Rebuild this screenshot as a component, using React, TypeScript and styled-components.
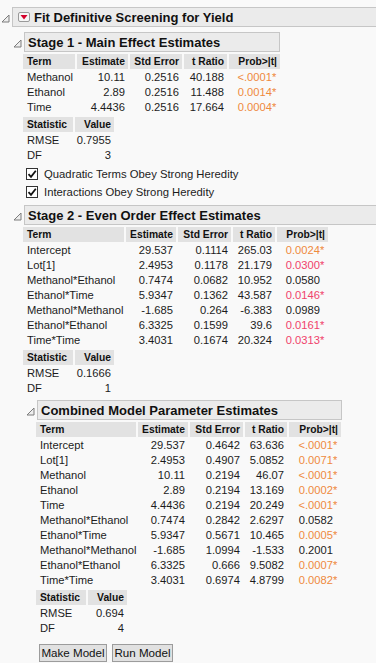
import React from "react";
import styled, { createGlobalStyle } from "styled-components";

const GlobalStyle = createGlobalStyle`
  html, body {
    margin: 0;
    padding: 0;
    background: #f9f9f9;
  }
  body {
    font-family: "Liberation Sans", Arial, sans-serif;
    font-size: 11.2px;
    color: #1c1c1c;
  }
`;

const Page = styled.div`
  width: 376px;
  height: 663px;
  overflow: hidden;
  padding-top: 7px;
  box-sizing: border-box;
`;

const Outline = styled.section<{ $x: number; $top?: number }>`
  margin-left: ${(p) => p.$x}px;
  margin-top: ${(p) => p.$top ?? 0}px;
`;

const OutlineHead = styled.div`
  display: flex;
  align-items: center;
`;

const Twisty = styled.span`
  width: 11px;
  height: 20px;
  display: flex;
  align-items: center;
  padding-top: 3px;
  box-sizing: border-box;
  flex: none;
`;

const TitleBar = styled.div<{ $width?: number }>`
  height: 20px;
  box-sizing: border-box;
  border: 1px solid #c6c6c6;
  background: #ebebeb;
  display: flex;
  align-items: center;
  gap: 4px;
  padding-left: 3px;
  font-weight: bold;
  font-size: 13px;
  white-space: nowrap;
  color: #111;
  ${(p) => (p.$width ? `width: ${p.$width}px;` : `flex: 1; margin-right: -6px;`)}
`;

const RedMenu = styled.span`
  display: flex;
  margin-left: 2px;
`;

const OutlineBody = styled.div<{ $indent: number }>`
  padding-left: ${(p) => p.$indent}px;
`;

const Grid = styled.div<{ $cols: string; $top: number }>`
  display: grid;
  grid-template-columns: ${(p) => p.$cols};
  column-gap: 2px;
  margin-top: ${(p) => p.$top}px;
  width: max-content;
`;

const HeadCell = styled.div<{ $right?: boolean }>`
  height: 15px;
  line-height: 15px;
  margin-bottom: 1px;
  background: #e2e2e2;
  font-weight: bold;
  font-size: 10.3px;
  text-align: ${(p) => (p.$right ? "right" : "left")};
  padding: ${(p) => (p.$right ? "0 3px 0 0" : "0 0 0 4px")};
  white-space: nowrap;
  color: #111;
`;

const Cell = styled.div<{ $right?: boolean; $tone?: string }>`
  height: 15px;
  line-height: 15px;
  text-align: ${(p) => (p.$right ? "right" : "left")};
  padding: ${(p) => (p.$right ? "0 3px 0 0" : "0 0 0 4px")};
  white-space: nowrap;
  color: ${(p) => p.$tone ?? "#1c1c1c"};
`;

const Star = styled.span`
  display: inline-block;
  width: 5px;
  text-align: left;
`;

const CheckList = styled.div`
  margin-top: 2px;
`;

const CheckRow = styled.label`
  display: flex;
  align-items: center;
  gap: 6px;
  height: 18px;
  padding-left: 3px;
  font-size: 11.3px;
`;

const Box = styled.span`
  width: 12px;
  height: 12px;
  box-sizing: border-box;
  border: 1px solid #333;
  background: #fff;
  display: grid;
  place-items: center;
`;

const ButtonRow = styled.div`
  display: flex;
  gap: 5px;
  margin: 8px 0 0 3px;
`;

const Button = styled.button<{ $w: number }>`
  width: ${(p) => p.$w}px;
  height: 18px;
  padding: 0;
  border: 1px solid #9c9c9c;
  background: #e1e1e1;
  font-family: inherit;
  font-size: 11.6px;
  color: #111;
  line-height: 16px;
`;

const ORANGE = "#ef8a3d";
const RED = "#f0436c";

type Prob = { v: string; tone?: string };
type Row = [string, string, string, string, Prob];

const Tri = () => (
  <svg width="9" height="9" viewBox="0 0 9 9">
    <polygon points="8,1 8,8 1,8" fill="#eeeeee" stroke="#7c7c7c" strokeWidth="1" />
  </svg>
);

const RedTriangle = () => (
  <svg width="12" height="10" viewBox="0 0 12 10">
    <rect x="0.5" y="0.5" width="11" height="9" rx="1.5" fill="#f6f6f6" stroke="#9a9a9a" />
    <polygon points="2.5,3 9.5,3 6,7.5" fill="#d4002a" />
  </svg>
);

const Check = () => (
  <svg width="10" height="10" viewBox="0 0 10 10">
    <path d="M1.5 5.2 L4 7.8 L8.8 1.8" fill="none" stroke="#111" strokeWidth="1.8" />
  </svg>
);

const EstimateTable = ({ widths, rows }: { widths: number[]; rows: Row[] }) => (
  <Grid $cols={widths.map((w) => `${w}px`).join(" ")} $top={2}>
    <HeadCell>Term</HeadCell>
    <HeadCell $right>Estimate</HeadCell>
    <HeadCell $right>Std Error</HeadCell>
    <HeadCell $right>t Ratio</HeadCell>
    <HeadCell $right>Prob&gt;|t|</HeadCell>
    {rows.map(([term, est, se, t, p]) => (
      <React.Fragment key={term}>
        <Cell>{term}</Cell>
        <Cell $right>{est}</Cell>
        <Cell $right>{se}</Cell>
        <Cell $right>{t}</Cell>
        <Cell $right $tone={p.tone}>
          {p.v}
          <Star>{p.tone ? "*" : ""}</Star>
        </Cell>
      </React.Fragment>
    ))}
  </Grid>
);

const StatTable = ({ rmse, df }: { rmse: string; df: string }) => (
  <Grid $cols="50px 39px" $top={2}>
    <HeadCell>Statistic</HeadCell>
    <HeadCell $right>Value</HeadCell>
    <Cell>RMSE</Cell>
    <Cell $right>{rmse}</Cell>
    <Cell>DF</Cell>
    <Cell $right>{df}</Cell>
  </Grid>
);

const stage1: Row[] = [
  ["Methanol", "10.11", "0.2516", "40.188", { v: "<.0001", tone: ORANGE }],
  ["Ethanol", "2.89", "0.2516", "11.488", { v: "0.0014", tone: ORANGE }],
  ["Time", "4.4436", "0.2516", "17.664", { v: "0.0004", tone: ORANGE }],
];

const stage2: Row[] = [
  ["Intercept", "29.537", "0.1114", "265.03", { v: "0.0024", tone: ORANGE }],
  ["Lot[1]", "2.4953", "0.1178", "21.179", { v: "0.0300", tone: RED }],
  ["Methanol*Ethanol", "0.7474", "0.0682", "10.952", { v: "0.0580" }],
  ["Ethanol*Time", "5.9347", "0.1362", "43.587", { v: "0.0146", tone: RED }],
  ["Methanol*Methanol", "-1.685", "0.264", "-6.383", { v: "0.0989" }],
  ["Ethanol*Ethanol", "6.3325", "0.1599", "39.6", { v: "0.0161", tone: RED }],
  ["Time*Time", "3.4031", "0.1674", "20.324", { v: "0.0313", tone: RED }],
];

const combined: Row[] = [
  ["Intercept", "29.537", "0.4642", "63.636", { v: "<.0001", tone: ORANGE }],
  ["Lot[1]", "2.4953", "0.4907", "5.0852", { v: "0.0071", tone: ORANGE }],
  ["Methanol", "10.11", "0.2194", "46.07", { v: "<.0001", tone: ORANGE }],
  ["Ethanol", "2.89", "0.2194", "13.169", { v: "0.0002", tone: ORANGE }],
  ["Time", "4.4436", "0.2194", "20.249", { v: "<.0001", tone: ORANGE }],
  ["Methanol*Ethanol", "0.7474", "0.2842", "2.6297", { v: "0.0582" }],
  ["Ethanol*Time", "5.9347", "0.5671", "10.465", { v: "0.0005", tone: ORANGE }],
  ["Methanol*Methanol", "-1.685", "1.0994", "-1.533", { v: "0.2001" }],
  ["Ethanol*Ethanol", "6.3325", "0.666", "9.5082", { v: "0.0007", tone: ORANGE }],
  ["Time*Time", "3.4031", "0.6974", "4.8799", { v: "0.0082", tone: ORANGE }],
];

export default function App() {
  return (
    <Page>
      <GlobalStyle />
      <Outline $x={1}>
        <OutlineHead>
          <Twisty>
            <Tri />
          </Twisty>
          <TitleBar>
            <RedMenu>
              <RedTriangle />
            </RedMenu>
            Fit Definitive Screening for Yield
          </TitleBar>
        </OutlineHead>
        <OutlineBody $indent={12}>
          <Outline $x={0} $top={5}>
            <OutlineHead>
              <Twisty>
                <Tri />
              </Twisty>
              <TitleBar $width={256}>Stage 1 - Main Effect Estimates</TitleBar>
            </OutlineHead>
            <OutlineBody $indent={10}>
              <EstimateTable widths={[52, 51, 52, 43, 51]} rows={stage1} />
              <StatTable rmse="0.7955" df="3" />
              <CheckList>
                <CheckRow>
                  <Box>
                    <Check />
                  </Box>
                  Quadratic Terms Obey Strong Heredity
                </CheckRow>
                <CheckRow>
                  <Box>
                    <Check />
                  </Box>
                  Interactions Obey Strong Heredity
                </CheckRow>
              </CheckList>
            </OutlineBody>
          </Outline>
          <Outline $x={0} $top={4}>
            <OutlineHead>
              <Twisty>
                <Tri />
              </Twisty>
              <TitleBar>Stage 2 - Even Order Effect Estimates</TitleBar>
            </OutlineHead>
            <OutlineBody $indent={10}>
              <EstimateTable widths={[101, 50, 53, 42, 51]} rows={stage2} />
              <StatTable rmse="0.1666" df="1" />
              <Outline $x={3} $top={4}>
                <OutlineHead>
                  <Twisty>
                    <Tri />
                  </Twisty>
                  <TitleBar $width={305}>Combined Model Parameter Estimates</TitleBar>
                </OutlineHead>
                <OutlineBody $indent={10}>
                  <EstimateTable widths={[100, 50, 53, 42, 52]} rows={combined} />
                  <StatTable rmse="0.694" df="4" />
                  <ButtonRow>
                    <Button $w={68}>Make Model</Button>
                    <Button $w={61}>Run Model</Button>
                  </ButtonRow>
                </OutlineBody>
              </Outline>
            </OutlineBody>
          </Outline>
        </OutlineBody>
      </Outline>
    </Page>
  );
}
